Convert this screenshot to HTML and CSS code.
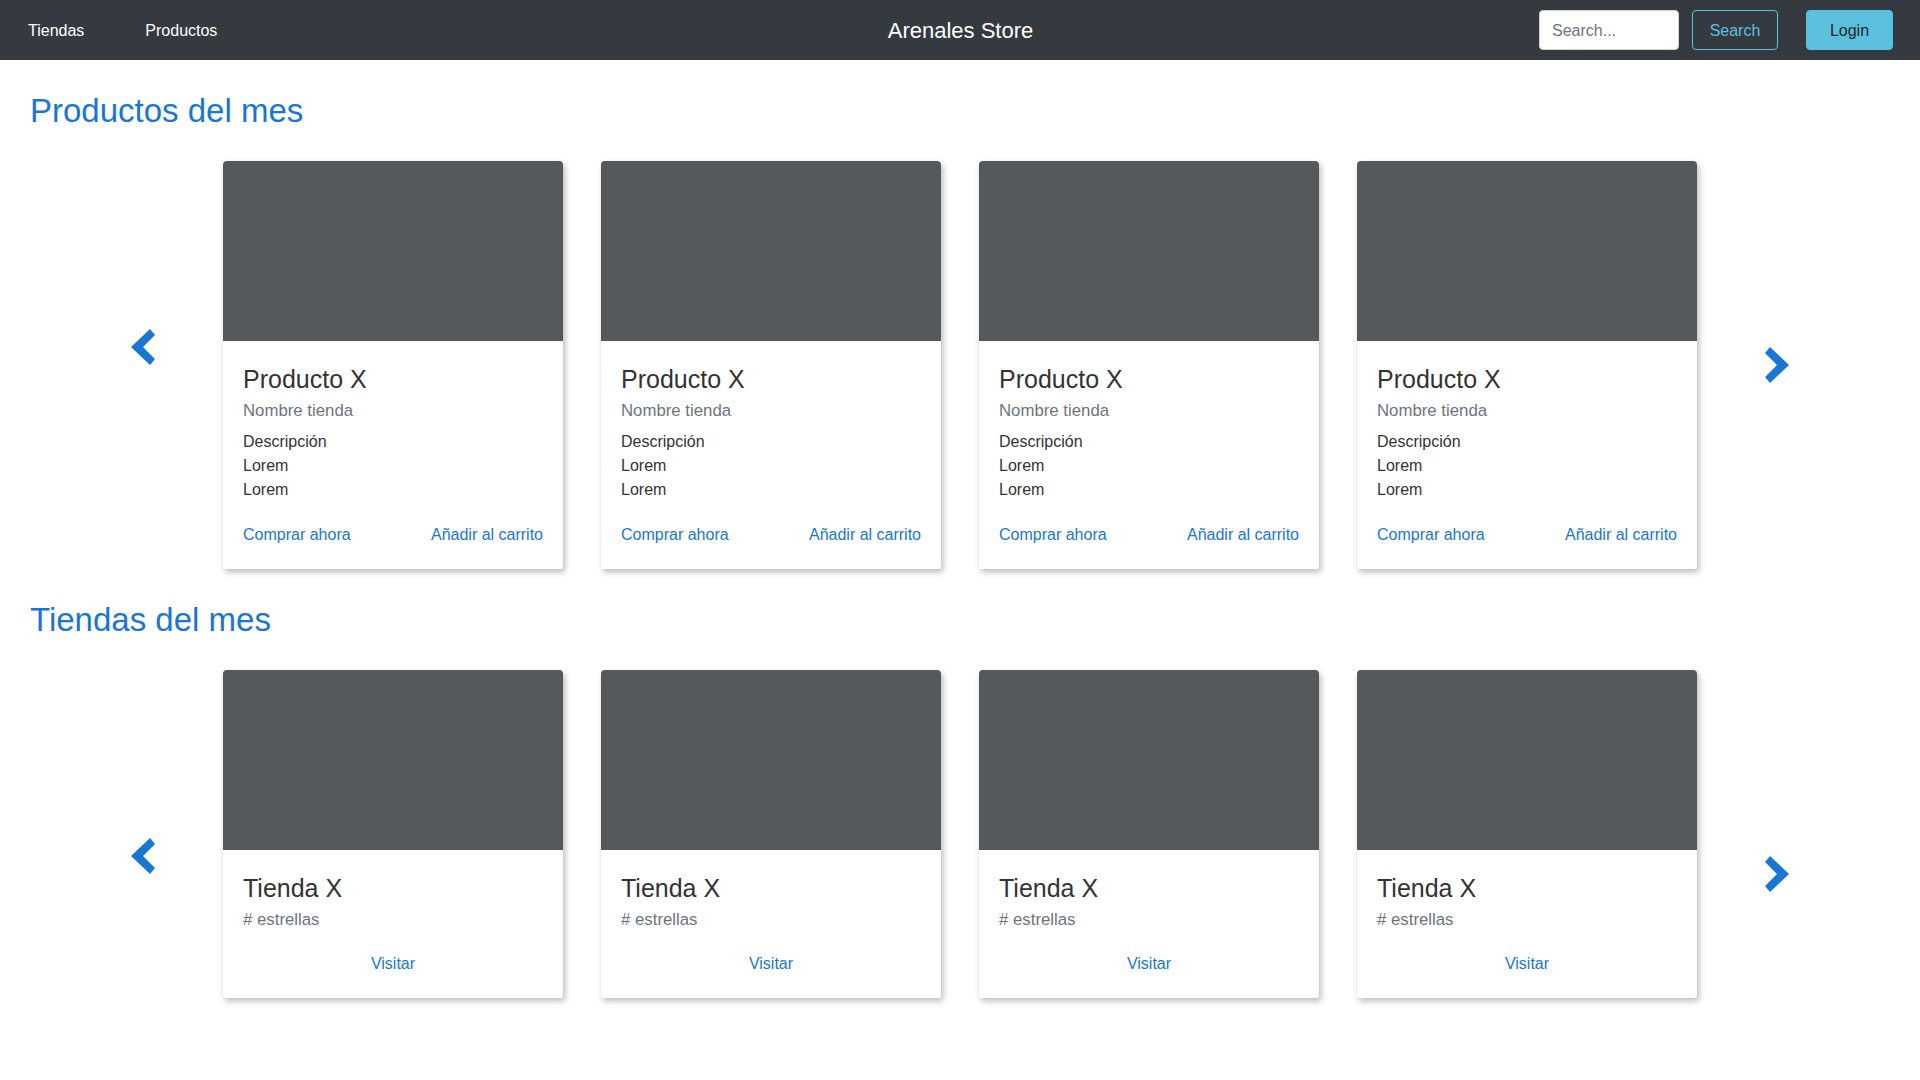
FILE: index.html
```html
<!DOCTYPE html>
<html lang="es">
<head>
<meta charset="utf-8">
<title>Arenales Store</title>
<link rel="stylesheet" href="styles.css">
</head>
<body>
<nav class="navbar">
  <div class="nav-left">
    <a class="nav-link" href="#">Tiendas</a>
    <a class="nav-link" href="#">Productos</a>
  </div>
  <div class="brand">Arenales Store</div>
  <div class="nav-right">
    <form class="search-form">
      <input class="search-input" type="text" placeholder="Search...">
      <button class="btn btn-outline" type="button">Search</button>
    </form>
    <button class="btn btn-login" type="button">Login</button>
  </div>
</nav>

<main class="page">
  <section class="section">
    <h2 class="section-title">Productos del mes</h2>
    <div class="carousel">
      <svg class="arrow arrow-left" width="24" height="36" viewBox="0 0 24 36"><polygon points="0,18 19,0 24,6 12,18 24,30 19,36" fill="#1976d2"/></svg>
      <div class="cards">
        <div class="card">
          <div class="card-img"></div>
          <div class="card-body">
            <h3 class="card-title">Producto X</h3>
            <div class="card-subtitle">Nombre tienda</div>
            <div class="card-text">Descripción<br>Lorem<br>Lorem</div>
            <div class="card-links"><a href="#">Comprar ahora</a><a href="#">Añadir al carrito</a></div>
          </div>
        </div>
        <div class="card">
          <div class="card-img"></div>
          <div class="card-body">
            <h3 class="card-title">Producto X</h3>
            <div class="card-subtitle">Nombre tienda</div>
            <div class="card-text">Descripción<br>Lorem<br>Lorem</div>
            <div class="card-links"><a href="#">Comprar ahora</a><a href="#">Añadir al carrito</a></div>
          </div>
        </div>
        <div class="card">
          <div class="card-img"></div>
          <div class="card-body">
            <h3 class="card-title">Producto X</h3>
            <div class="card-subtitle">Nombre tienda</div>
            <div class="card-text">Descripción<br>Lorem<br>Lorem</div>
            <div class="card-links"><a href="#">Comprar ahora</a><a href="#">Añadir al carrito</a></div>
          </div>
        </div>
        <div class="card">
          <div class="card-img"></div>
          <div class="card-body">
            <h3 class="card-title">Producto X</h3>
            <div class="card-subtitle">Nombre tienda</div>
            <div class="card-text">Descripción<br>Lorem<br>Lorem</div>
            <div class="card-links"><a href="#">Comprar ahora</a><a href="#">Añadir al carrito</a></div>
          </div>
        </div>
      </div>
      <svg class="arrow arrow-right" width="24" height="36" viewBox="0 0 24 36"><polygon points="24,18 5,0 0,6 12,18 0,30 5,36" fill="#1976d2"/></svg>
    </div>
  </section>

  <section class="section">
    <h2 class="section-title">Tiendas del mes</h2>
    <div class="carousel">
      <svg class="arrow arrow-left" width="24" height="36" viewBox="0 0 24 36"><polygon points="0,18 19,0 24,6 12,18 24,30 19,36" fill="#1976d2"/></svg>
      <div class="cards">
        <div class="card">
          <div class="card-img"></div>
          <div class="card-body">
            <h3 class="card-title">Tienda X</h3>
            <div class="card-subtitle"># estrellas</div>
            <div class="card-links center"><a href="#">Visitar</a></div>
          </div>
        </div>
        <div class="card">
          <div class="card-img"></div>
          <div class="card-body">
            <h3 class="card-title">Tienda X</h3>
            <div class="card-subtitle"># estrellas</div>
            <div class="card-links center"><a href="#">Visitar</a></div>
          </div>
        </div>
        <div class="card">
          <div class="card-img"></div>
          <div class="card-body">
            <h3 class="card-title">Tienda X</h3>
            <div class="card-subtitle"># estrellas</div>
            <div class="card-links center"><a href="#">Visitar</a></div>
          </div>
        </div>
        <div class="card">
          <div class="card-img"></div>
          <div class="card-body">
            <h3 class="card-title">Tienda X</h3>
            <div class="card-subtitle"># estrellas</div>
            <div class="card-links center"><a href="#">Visitar</a></div>
          </div>
        </div>
      </div>
      <svg class="arrow arrow-right" width="24" height="36" viewBox="0 0 24 36"><polygon points="24,18 5,0 0,6 12,18 0,30 5,36" fill="#1976d2"/></svg>
    </div>
  </section>
</main>
</body>
</html>
```
FILE: styles.css
```css
* { box-sizing: border-box; }

html, body {
  margin: 0;
  padding: 0;
  background: #fff;
  font-family: "Liberation Sans", Arial, Helvetica, sans-serif;
  font-size: 16px;
  line-height: 24px;
  color: #212529;
}

a { text-decoration: none; color: #1976d2; }

.navbar {
  height: 60px;
  background: #343a40;
  display: grid;
  grid-template-columns: 1fr auto 1fr;
  align-items: center;
  padding: 0 27px 0 28px;
}

.nav-left {
  display: flex;
  gap: 61px;
  align-items: center;
  padding-top: 1px;
}

.nav-link {
  color: #fff;
  font-size: 16px;
}

.brand {
  color: #fff;
  font-size: 22px;
  line-height: 30px;
  padding-top: 1px;
}

.nav-right {
  display: flex;
  justify-content: flex-end;
  align-items: center;
  gap: 28px;
}

.search-form {
  display: flex;
  gap: 13px;
  margin: 0;
}

.search-input {
  width: 140px;
  height: 40px;
  border: 1px solid #ced4da;
  border-radius: 4px;
  padding: 2px 12px 0;
  font-family: inherit;
  font-size: 16px;
  color: #495057;
  background: #fff;
}

.search-input::placeholder { color: #6c757d; }

.btn {
  height: 40px;
  border-radius: 4px;
  font-family: inherit;
  font-size: 16px;
  padding: 2px 0 0;
  cursor: pointer;
}

.btn-outline {
  width: 86px;
  background: transparent;
  border: 1px solid #5bc0de;
  color: #5bc0de;
}

.btn-login {
  width: 87px;
  background: #5bc0de;
  border: 1px solid #5bc0de;
  color: #212529;
}

.page {
  padding: 0 30px 60px;
}

.section-title {
  margin: 31px 0 30px;
  font-size: 33px;
  line-height: 40px;
  font-weight: 400;
  color: #1976d2;
}

.carousel {
  display: flex;
  justify-content: center;
  align-items: flex-start;
  gap: 68px;
}

.arrow { flex: none; display: block; }
.arrow-left { margin-top: 168px; }
.arrow-right { margin-top: 186px; }

.cards {
  display: flex;
  gap: 38px;
}

.card {
  width: 340px;
  background: #fff;
  border-radius: 4px 4px 2px 2px;
  box-shadow: 2px 3px 6px rgba(0, 0, 0, 0.28);
  overflow: hidden;
}

.card-img {
  height: 180px;
  background: #55595c;
}

.card-body {
  padding: 22px 20px 22px;
}

.card-title {
  margin: 0;
  font-size: 25px;
  line-height: 32px;
  font-weight: 400;
  color: #333;
}

.card-subtitle {
  margin-top: 4px;
  font-size: 16.8px;
  line-height: 24px;
  color: #6c757d;
}

.card-text {
  margin-top: 7px;
  color: #333;
}

.card-links {
  margin-top: 21px;
  display: flex;
  justify-content: space-between;
}

.card-links.center {
  margin-top: 20px;
  justify-content: center;
}
```
